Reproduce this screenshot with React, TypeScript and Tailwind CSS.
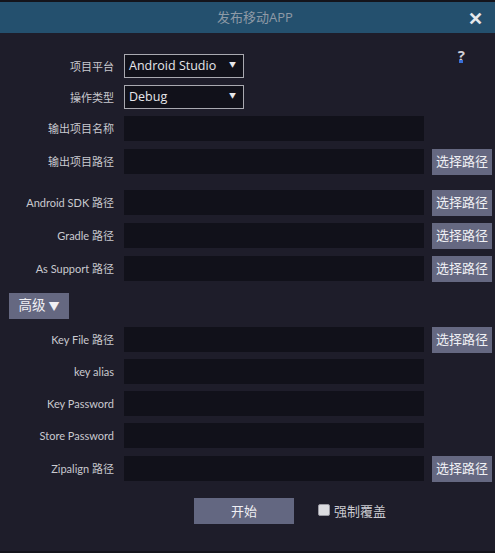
import React from 'react';

const font = { fontFamily: '"Open Sans", "Noto Sans CJK SC", sans-serif' };
const labelFont = { fontFamily: 'Lato, "Noto Sans CJK SC", sans-serif' };

function Label({ text }: { text: string }) {
  return (
    <div className="w-[114px] shrink-0 text-right text-[11px] text-[#c9c9cf] leading-none whitespace-nowrap" style={labelFont}>
      {text}
    </div>
  );
}

function PickButton() {
  return (
    <button className="ml-[8px] w-[60px] h-[26px] bg-[#656881] text-[13px] text-[#f0f0f4] leading-none whitespace-nowrap">
      选择路径
    </button>
  );
}

function Field({ label, pick, mt }: { label: string; pick?: boolean; mt: string }) {
  return (
    <div className={`flex items-center h-[25px] ${mt}`}>
      <Label text={label} />
      <div className="ml-[10px] w-[300px] h-[25px] bg-[#11111a]" />
      {pick && <PickButton />}
    </div>
  );
}

function Select({ value }: { value: string }) {
  return (
    <div className="ml-[10px] w-[120px] h-[24px] border border-[#a9a9b0] bg-[#11111a] flex items-center justify-between pl-[4px] pr-[7px]">
      <span className="text-[12.5px] text-[#e6e6ea] leading-none">{value}</span>
      <span className="text-[7px] text-[#e6e6ea] leading-none -mt-[3px]">▼</span>
    </div>
  );
}

export default function App() {
  return (
    <div className="w-[495px] h-[553px] bg-[#14141b] pt-[2px] overflow-hidden" style={font}>
      <div className="h-[31px] bg-[#24506e] flex items-center">
        <div className="flex-1 text-center text-[13px] text-[#8e9aa6] pl-[55px]">发布移动APP</div>
        <div className="w-[40px] text-[18px] font-bold text-[#e6e8ec] text-center leading-none">✕</div>
      </div>
      <div className="h-[518px] bg-[#1e1d2a] flex flex-col">
        <div className="flex items-start mt-[21px]">
          <div className="flex items-center h-[24px]">
            <Label text="项目平台" />
            <Select value="Android Studio" />
          </div>
          <div className="ml-auto mr-[30px] -mt-[6px] flex flex-col items-center">
            <span className="text-[15px] font-bold text-[#d0d0d8] leading-none">?</span>
            <span className="w-[4px] h-[3px] bg-[#3a6fd8] -mt-[3px]" />
          </div>
        </div>
        <div className="flex items-center h-[24px] mt-[7px]">
          <Label text="操作类型" />
          <Select value="Debug" />
        </div>
        <Field label="输出项目名称" mt="mt-[7px]" />
        <Field label="输出项目路径" pick mt="mt-[8px]" />
        <Field label="Android SDK 路径" pick mt="mt-[16px]" />
        <Field label="Gradle 路径" pick mt="mt-[8px]" />
        <Field label="As Support 路径" pick mt="mt-[8px]" />
        <div className="mt-[12px] ml-[9px]">
          <button className="w-[60px] h-[26px] bg-[#656881] text-[13.5px] text-[#f0f0f4] leading-none flex items-center justify-center gap-[3px]">
            <span>高级</span>
            <span className="text-[11px]">▼</span>
          </button>
        </div>
        <Field label="Key File 路径" pick mt="mt-[8px]" />
        <Field label="key alias" mt="mt-[7px]" />
        <Field label="Key Password" mt="mt-[7px]" />
        <Field label="Store Password" mt="mt-[7px]" />
        <Field label="Zipalign 路径" pick mt="mt-[8px]" />
        <div className="flex items-center mt-[17px]">
          <button className="ml-[194px] w-[100px] h-[26px] bg-[#636781] text-[13px] text-[#f0f0f4] leading-none">开始</button>
          <label className="ml-[24px] flex items-center gap-[4px] -mt-[2px]">
            <span className="w-[12px] h-[12px] rounded-[2px] bg-[#dcdce0] border border-[#9a9aa2]" />
            <span className="text-[13px] text-[#c9c9cf] leading-none mt-[3px]">强制覆盖</span>
          </label>
        </div>
      </div>
    </div>
  );
}
